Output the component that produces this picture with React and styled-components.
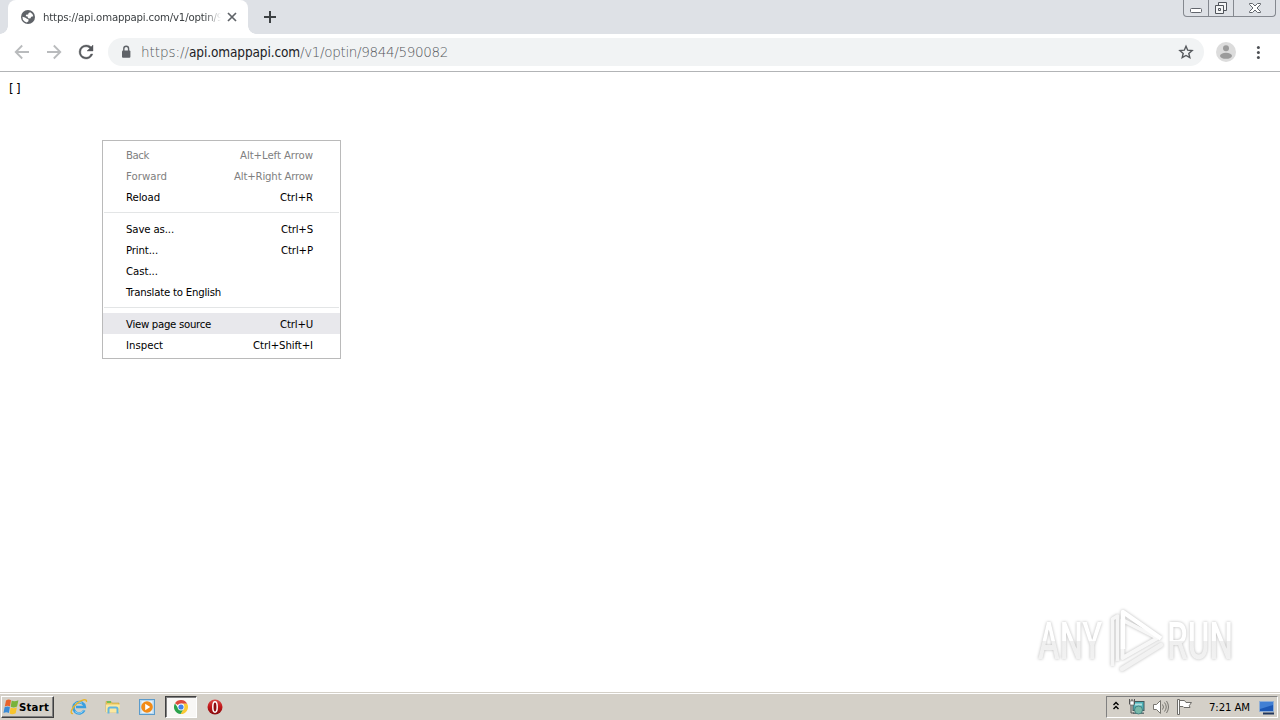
import React, { useLayoutEffect, useRef } from "react";
import styled, { createGlobalStyle, css } from "styled-components";

const ui = `"DejaVu Sans Condensed", "DejaVu Sans", "Liberation Sans", sans-serif`;

const Global = createGlobalStyle`
  * { box-sizing: border-box; }
  body { margin: 0; background: #fff; overflow: hidden; }
  svg { display: block; flex: none; }
`;

const Screen = styled.div`
  position: relative;
  display: flex;
  flex-direction: column;
  width: 1280px;
  height: 720px;
  font-family: ${ui};
  font-stretch: condensed;
  font-size: 11.3px;
  color: #000;
`;

const Label = styled.span`
  display: inline-block;
  white-space: pre;
  flex: none;
`;

/* Text tracked so that it fills the given number of pixels. */
function Fit({ width, children, ...rest }) {
  const ref = useRef(null);
  useLayoutEffect(() => {
    const el = ref.current;
    el.style.letterSpacing = "0px";
    const natural = el.getBoundingClientRect().width;
    el.style.letterSpacing = `${(width - natural) / children.length}px`;
  }, [width, children]);
  return <Label ref={ref} {...rest}>{children}</Label>;
}

const TabStrip = styled.header`
  display: flex;
  justify-content: space-between;
  height: 34px;
  padding-left: 8px;
  background: #dee1e6;
`;
const Tabs = styled.div`
  display: flex;
  align-items: center;
`;
const Tab = styled.div`
  position: relative;
  display: flex;
  align-items: center;
  width: 240px;
  height: 34px;
  padding: 0 10px 0 12px;
  background: #fff;
  border-radius: 8px 8px 0 0;
  &::before, &::after {
    content: "";
    position: absolute;
    bottom: 0;
    width: 8px;
    height: 8px;
  }
  &::before { left: -8px; background: radial-gradient(circle at 0 0, transparent 7.5px, #fff 8px); }
  &::after { right: -8px; background: radial-gradient(circle at 100% 0, transparent 7.5px, #fff 8px); }
`;
const TabTitle = styled.div`
  width: 182px;
  height: 18px;
  margin-left: 7px;
  margin-right: 1px;
  line-height: 19px;
  color: #3c4043;
  mask-image: linear-gradient(90deg, #000 162px, transparent 178px);
`;
const NewTab = styled.div`
  margin-left: 14px;
`;
const Caption = styled.div`
  display: flex;
  width: 93px;
  height: 17px;
  margin-right: 4px;
  border: 1px solid #84888f;
  border-top: 0;
  border-radius: 0 0 4px 4px;
`;
const CaptionButton = styled.div`
  display: flex;
  justify-content: center;
  width: ${(p) => p.$w}px;
  & + & { border-left: 1px solid #84888f; }
`;

const Toolbar = styled.div`
  display: flex;
  align-items: center;
  height: 38px;
  padding: 0 14px 1px;
  border-bottom: 1px solid #b2b4b6;
  background: #fff;
`;
const NavButtons = styled.div`
  display: flex;
  gap: 16px;
  margin-right: 14px;
`;
const Omnibox = styled.div`
  display: flex;
  align-items: center;
  width: 1096px;
  height: 28px;
  padding: 0 10px 0 10px;
  border-radius: 14px;
  background: #f1f3f4;
`;
const Url = styled.div`
  display: flex;
  flex: 1;
  margin-left: 7px;
  font-family: "DejaVu Sans Light", "DejaVu Sans", sans-serif;
  font-stretch: normal;
  font-weight: 200;
  font-size: 13.5px;
  line-height: 18px;
  color: #53575b;
`;
const Host = styled(Fit)`
  color: #202124;
  font-family: ${ui};
  font-stretch: condensed;
  font-weight: 400;
  font-size: 13.5px;
`;
const Account = styled.div`
  margin: 0 14px 0 12px;
`;

const Page = styled.main`
  flex: 1;
  padding: 9px 9px;
  font-size: 13px;
  line-height: 16px;
`;

const Menu = styled.div`
  position: absolute;
  left: 102px;
  top: 140px;
  width: 239px;
  padding: 3px 0;
  border: 1px solid #bababa;
  background: #fff;
`;
const MenuItem = styled.div`
  display: flex;
  justify-content: space-between;
  height: 21px;
  padding: 0 27px 0 23px;
  line-height: 23px;
  ${(p) => p.$disabled && css`color: #808080;`}
  ${(p) => p.$active && css`background: #e8e8ec;`}
`;
const Separator = styled.div`
  height: 11px;
  padding: 5px 1px;
  &::before { content: ""; display: block; height: 1px; background: #e3e5e6; }
`;

const Watermark = styled.div`
  position: absolute;
  left: 1038px;
  top: 606px;
  display: flex;
  align-items: center;
  width: 220px;
  height: 68px;
  filter: drop-shadow(0 0 1.5px rgba(0, 0, 0, 0.28));
`;
const MarkBox = styled.div`
  width: ${(p) => p.$w}px;
  flex: none;
`;
const MarkWord = styled.div`
  width: max-content;
  font: 500 51px/68px Roboto, sans-serif;
  font-stretch: normal;
  padding-top: 3px;
  white-space: nowrap;
  color: transparent;
  background: linear-gradient(#fff 50%, #efefef 51%, #f4f4f4);
  background-clip: text;
  transform: scaleX(${(p) => p.$scale});
  transform-origin: 0 50%;
`;

const Taskbar = styled.footer`
  display: flex;
  align-items: center;
  height: 28px;
  padding: 2px 2px 1px 1px;
  border-top: 1px solid #d4d0c8;
  box-shadow: inset 0 1px #fff;
  background: #d4d0c8;
`;
const Start = styled.div`
  display: flex;
  align-items: center;
  width: 53px;
  height: 22px;
  padding-left: 1px;
  border: 1px solid;
  border-color: #fff #404040 #404040 #fff;
  box-shadow: inset -1px -1px #808080;
  font-weight: 700;
`;
const Launchers = styled.div`
  display: flex;
  align-items: center;
  flex: 1;
  padding-left: 8px;
`;
const Launcher = styled.div`
  display: flex;
  align-items: center;
  justify-content: center;
  width: ${(p) => (p.$open ? 32 : 34)}px;
  height: 22px;
  ${(p) => p.$open && css`
    margin: 0 1px;
    border: 1px solid;
    border-color: #404040 #fff #fff #404040;
    box-shadow: inset 1px 1px #808080;
    background: #f8f7f5;
  `}
`;
const Tray = styled.div`
  display: flex;
  align-items: center;
  width: 172px;
  height: 22px;
  padding-left: 5px;
  border: 1px solid;
  border-color: #808080 #fff #fff #808080;
`;
const Clock = styled.div`
  margin: 0 9px 0 16px;
  line-height: 21px;
`;
const TrayIcon = styled.div`
  margin-left: ${(p) => p.$gap}px;
`;

const Globe = () => (
  <svg width="16" height="16" viewBox="0 0 16 16">
    <circle cx="8" cy="8" r="7" fill="#5f6368" />
    <path d="M10.2 3.2 12.4 4.9 13.3 7.2 11.3 7.8 10.3 9.6 8 9.2 7.6 7.4 5.8 7.2 6 5.8 8.2 5.4 8.6 4z" fill="#fff" />
    <path d="M2.4 7.8 5 8.4 7 9.8 8.6 10.4 8.4 12.2 6.8 13.5 4.6 12.6 2.9 10.7z" fill="#fff" />
  </svg>
);

const StrokeIcon = ({ size, d, color, w = 2, view = 16 }) => (
  <svg width={size} height={size} viewBox={`0 0 ${view} ${view}`} fill="none" stroke={color} strokeWidth={w}>
    <path d={d} />
  </svg>
);

const Reload = () => (
  <svg width="16" height="16" viewBox="0 0 16 16">
    <path d="M13.2 2.8A7 7 0 0 0 8 1a7 7 0 1 0 6.8 9h-2A5.2 5.2 0 1 1 8 2.8c1.5 0 2.8.6 3.7 1.5L9 7h6V1z" fill="#55585c" stroke="#55585c" strokeWidth=".4" />
  </svg>
);

const Lock = () => (
  <svg width="16" height="16" viewBox="0 0 16 16">
    <rect x="4" y="6.4" width="8.4" height="7.4" rx="1" fill="#5f6368" />
    <path d="M5.8 7V4.7a2.4 2.4 0 0 1 4.8 0V7" fill="none" stroke="#5f6368" strokeWidth="1.4" />
  </svg>
);

const Star = () => (
  <svg width="16" height="16" viewBox="0 0 16 16">
    <path d="m8 2.2 1.7 4 4.4.4-3.3 2.9 1 4.2L8 11.5l-3.8 2.2 1-4.2-3.3-2.9 4.4-.4z" fill="none" stroke="#55585c" strokeWidth="1.4" />
  </svg>
);

const Avatar = () => (
  <svg width="20" height="20" viewBox="0 0 20 20">
    <circle cx="10" cy="10" r="10" fill="#dcdcdc" />
    <circle cx="10" cy="6.2" r="3" fill="#9b9b9b" />
    <ellipse cx="10" cy="13.8" rx="6" ry="3" fill="#9b9b9b" />
  </svg>
);

const Dots = () => (
  <svg width="16" height="16" viewBox="0 0 16 16" fill="#4d5054">
    <circle cx="8.4" cy="3.5" r="1.5" /><circle cx="8.4" cy="8.5" r="1.5" /><circle cx="8.4" cy="13.5" r="1.5" />
  </svg>
);

const Minimize = () => (
  <svg width="14" height="16" viewBox="0 0 14 16">
    <rect x="1.5" y="8.5" width="11" height="4" rx="1" fill="#fff" stroke="#62666d" />
  </svg>
);
const Restore = () => (
  <svg width="14" height="16" viewBox="0 0 14 16" fill="#f4f5f6" stroke="#50545b">
    <path d="M4.5 2.5h8v8h-8z" />
    <path d="M1.5 5.5h8v8h-8z" />
    <path d="M4.5 8.5h2v2h-2z" />
  </svg>
);
const CloseWindow = () => (
  <svg width="14" height="16" viewBox="0 0 14 16">
    <path d="M1.5 3.5h3L7 6l2.5-2.5h3v1L9 8l3.5 3.5v1h-3L7 10l-2.5 2.5h-3v-1L5 8 1.5 4.5z" fill="#fff" stroke="#62666d" />
  </svg>
);

const WindowsFlag = () => (
  <svg width="16" height="16" viewBox="0 0 16 16">
    <path d="M3 1.5Q5.6-.2 8 1.2L7 7.4Q4.5 6 1.8 7.5z" fill="#e8632b" />
    <path d="M8.7 1.6q2.7 1.4 6.7-.4l-1.3 6.2q-3.4 1.8-6.4.3z" fill="#79b33b" />
    <path d="M1.6 8.3q2.8-1.6 5.3-.2L5.9 14q-2.5-1.3-5.4 0z" fill="#3a8bd6" />
    <path d="M7.6 8.5q2.7 1.5 6.3-.2l-1.2 5.9q-3.3 1.8-6.1.4z" fill="#f8c52e" />
  </svg>
);

const Explorer = () => (
  <svg width="18" height="18" viewBox="0 0 18 18" fill="none">
    <path d="M14.3 12.3A5.7 5.7 0 1 1 14.8 9H6" stroke="#3a9fe0" strokeWidth="2.6" />
    <path d="M13.7 12.4A5.4 5.4 0 0 1 5 13.5M5 6.2a5 5 0 0 1 7-1" stroke="#8fd3f6" strokeWidth="1" />
    <path d="M3 15.6C-.8 16 1.6 9.7 7 5.4 12.2 1.2 17.3.4 16.4 4" stroke="#e8b52d" strokeWidth="1.4" />
  </svg>
);

const Folder = () => (
  <svg width="18" height="18" viewBox="0 0 18 18">
    <path d="M2 3.5h5l1 1.5h7v9H2z" fill="#e9c75d" stroke="#c9a13a" strokeWidth=".6" />
    <path d="M3 3h4v2H3z" fill="#74bd58" />
    <path d="M2 6.5h14l-.6 8H2z" fill="#fbe8a0" />
    <path d="M4.5 15.5V11q0-1.5 1.5-1.5h6q1.5 0 1.5 1.5v4.5" fill="none" stroke="#62b5df" strokeWidth="2" />
  </svg>
);

const MediaPlayer = () => (
  <svg width="18" height="18" viewBox="0 0 18 18">
    <rect x="1.5" y="1.5" width="15" height="15" fill="#b8d9f0" stroke="#5b9bcb" />
    <rect x="3.5" y="3" width="11" height="12" fill="#e7f2fa" />
    <circle cx="9" cy="9" r="5.8" fill="#f28b17" />
    <path d="m7.2 5.8 5 3.2-5 3.2z" fill="#fff" />
  </svg>
);

const Chrome = () => (
  <svg width="16" height="16" viewBox="0 0 16 16">
    <path d="M8 8 2 4.2A7 7 0 0 1 14.2 4.8H8z" fill="#dd4a3c" />
    <path d="M14.2 4.8A7 7 0 0 1 7.4 15L11 9.5 9 4.8z" fill="#fbca35" />
    <path d="M1.9 4.5A7 7 0 0 0 7.6 15L10.5 10 5.5 9.5z" fill="#2ba24c" />
    <circle cx="8" cy="8" r="3.4" fill="#fff" />
    <circle cx="8" cy="8" r="2.6" fill="#4382ea" />
  </svg>
);

const Opera = () => (
  <svg width="16" height="16" viewBox="0 0 16 16">
    <defs>
      <linearGradient id="opera" x1="0" y1="0" x2="0" y2="1">
        <stop offset="0" stopColor="#dc4a48" /><stop offset=".5" stopColor="#c0171a" /><stop offset="1" stopColor="#860b0d" />
      </linearGradient>
    </defs>
    <circle cx="8" cy="8" r="7.5" fill="url(#opera)" />
    <ellipse cx="8" cy="8" rx="2.2" ry="5.2" fill="#8e0c10" stroke="#fff" strokeWidth="1.5" />
  </svg>
);

const Chevrons = () => (
  <svg width="8" height="12" viewBox="0 0 8 12" fill="none" stroke="#000" strokeWidth="1.4">
    <path d="m1.5 4 2.5-2.5L6.5 4M1.5 8 4 5.5 6.5 8" />
  </svg>
);
const Network = () => (
  <svg width="17" height="18" viewBox="0 0 17 18">
    <rect x="5" y="3.5" width="11" height="9" fill="#4eb1b8" stroke="#42595c" />
    <path d="M7 5.5h7v2H7z" fill="#b2dfdf" />
    <path d="M5 14.5h11v1.5H5z" fill="#647174" />
    <circle cx="10.5" cy="12" r="4" fill="#78b9a9" stroke="#39777a" strokeWidth=".8" />
    <path d="M1.5 1v5h5V1M4 1v4M3 6v9h3" fill="none" stroke="#555" />
    <path d="M2 3h4v4H2z" fill="#fff" stroke="#555" strokeWidth=".6" />
  </svg>
);
const Speaker = () => (
  <svg width="17" height="18" viewBox="0 0 17 18" fill="none" stroke="#77756f">
    <path d="M1.5 6.5h3l4-4v13l-4-4h-3z" fill="#fff" />
    <path d="M10.5 6.5q2 2.5 0 5M12.5 4.5q3.5 4.5 0 9M14.5 3q4 6 0 12" />
  </svg>
);
const ActionFlag = () => (
  <svg width="17" height="18" viewBox="0 0 17 18">
    <path d="M1.5 1.5h2v15h-2zM3.5 2.5h5l1.5 2h5.5l-2.2 3 .7 2h-6l-1-1H3.5z" fill="#fff" stroke="#6e6d69" />
  </svg>
);
const Desktop = () => (
  <svg width="16" height="16" viewBox="0 0 16 16">
    <path d="M.5 2.5h14v10H.5z" fill="#1d58b5" stroke="#8faed6" />
    <path d="M1 3h13v3L1 10z" fill="#4280d4" />
    <path d="M4 13.5h11v2H4z" fill="#20365c" />
  </svg>
);

const PlayMark = () => (
  <svg width="62" height="68" viewBox="0 0 62 68" fill="none" strokeLinejoin="round">
    <path d="M7.5 60V13l5-3v45" stroke="#f6f6f6" strokeWidth="3.5" />
    <path d="M17.5 14v38l35-20z" stroke="#f7f7f7" strokeWidth="4" />
    <path d="M18 43V6l38 26.5" stroke="#fff" strokeWidth="4.5" />
    <path d="m17 63 39-24" stroke="#f2f2f2" strokeWidth="4.5" strokeLinecap="round" />
  </svg>
);

const groups = [
  [
    { name: "Back", w: 23, keys: "Alt+Left Arrow", kw: 73, disabled: true },
    { name: "Forward", w: 41, keys: "Alt+Right Arrow", kw: 79, disabled: true },
    { name: "Reload", w: 34, keys: "Ctrl+R", kw: 33 },
  ],
  [
    { name: "Save as...", w: 48, keys: "Ctrl+S", kw: 32 },
    { name: "Print...", w: 32, keys: "Ctrl+P", kw: 32 },
    { name: "Cast...", w: 32 },
    { name: "Translate to English", w: 95 },
  ],
  [
    { name: "View page source", w: 85, keys: "Ctrl+U", kw: 33, active: true },
    { name: "Inspect", w: 37, keys: "Ctrl+Shift+I", kw: 60 },
  ],
];

export default function App() {
  return (
    <Screen>
      <Global />
      <TabStrip>
        <Tabs>
          <Tab>
            <Globe />
            <TabTitle><Fit width={180}>https://api.omappapi.com/v1/optin/9</Fit></TabTitle>
            <StrokeIcon size={12} view={12} d="m2 2 8 8m0-8-8 8" color="#5f6368" w={1.7} />
          </Tab>
          <NewTab><StrokeIcon size={16} d="M8 2v12M2 8h12" color="#3c4043" /></NewTab>
        </Tabs>
        <Caption>
          <CaptionButton $w={24}><Minimize /></CaptionButton>
          <CaptionButton $w={25}><Restore /></CaptionButton>
          <CaptionButton $w={42}><CloseWindow /></CaptionButton>
        </Caption>
      </TabStrip>
      <Toolbar>
        <NavButtons>
          <StrokeIcon size={16} d="M15 8H2M8.2 1.5 1.7 8l6.5 6.5" color="#b9bbbd" w={1.8} />
          <StrokeIcon size={16} d="M1 8h13M7.8 1.5 14.3 8l-6.5 6.5" color="#b9bbbd" w={1.8} />
          <Reload />
        </NavButtons>
        <Omnibox>
          <Lock />
          <Url>
            <Fit width={48}>https://</Fit>
            <Host width={111}>api.omappapi.com</Host>
            <Fit width={148}>/v1/optin/9844/590082</Fit>
          </Url>
          <Star />
        </Omnibox>
        <Account><Avatar /></Account>
        <Dots />
      </Toolbar>
      <Page><Fit width={14}>[]</Fit></Page>
      <Taskbar>
        <Start><WindowsFlag /><Fit width={30}>Start</Fit></Start>
        <Launchers>
          <Launcher><Explorer /></Launcher>
          <Launcher><Folder /></Launcher>
          <Launcher><MediaPlayer /></Launcher>
          <Launcher $open><Chrome /></Launcher>
          <Launcher><Opera /></Launcher>
        </Launchers>
        <Tray>
          <Chevrons />
          <TrayIcon $gap={8}><Network /></TrayIcon>
          <TrayIcon $gap={7}><Speaker /></TrayIcon>
          <TrayIcon $gap={7}><ActionFlag /></TrayIcon>
          <Clock><Fit width={41}>7:21 AM</Fit></Clock>
          <Desktop />
        </Tray>
      </Taskbar>
      <Menu>
        {groups.map((items, i) => (
          <React.Fragment key={i}>
            {i > 0 && <Separator />}
            {items.map((item) => (
              <MenuItem key={item.name} $disabled={item.disabled} $active={item.active}>
                <Fit width={item.w}>{item.name}</Fit>
                {item.keys && <Fit width={item.kw}>{item.keys}</Fit>}
              </MenuItem>
            ))}
          </React.Fragment>
        ))}
      </Menu>
      <Watermark>
        <MarkBox $w={67}><MarkWord $scale={0.64}>ANY</MarkWord></MarkBox>
        <PlayMark />
        <MarkBox $w={72}><MarkWord $scale={0.65}>RUN</MarkWord></MarkBox>
      </Watermark>
    </Screen>
  );
}
